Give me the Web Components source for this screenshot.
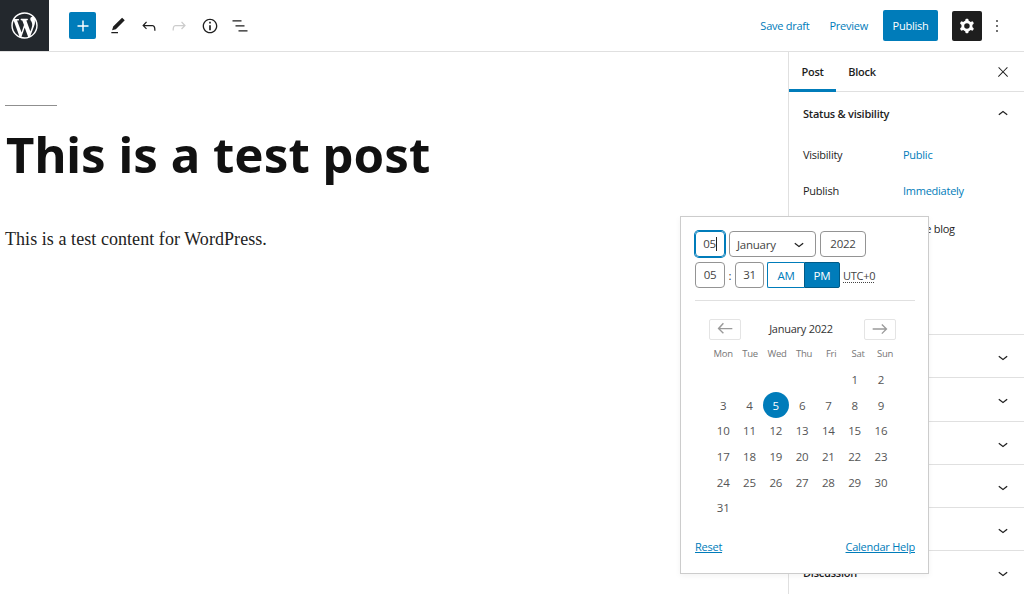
<!DOCTYPE html>
<html lang="en"><head><meta charset="utf-8"><title>Edit Post</title>
<style>
html,body{margin:0;padding:0;height:594px;overflow:hidden;background:#fff}
body{font-family:"Open Sans","Noto Sans",sans-serif;font-size:12px;color:#1e1e1e;letter-spacing:-.25px}
wp-app{display:block}
</style></head><body>
<wp-app></wp-app>
<script>
const P={
plus:'M18 11.2h-5.2V6h-1.6v5.2H6v1.6h5.2V18h1.6v-5.2H18z',
edit:'M20.1 5.1L16.9 2 6.2 12.7l-1.3 4.4 4.5-1.3L20.1 5.1zM4 20.8h8v-1.5H4v1.5z',
undo:'M18.3 11.7c-.6-.6-1.4-.9-2.3-.9H6.7l2.9-3.3-1.1-1-4.5 5L8.5 16l1-1-2.7-2.7H16c.5 0 .9.2 1.3.5 1 1 1 3.4 1 4.5v.3h1.5v-.2c0-1.5 0-4.3-1.5-5.7z',
redo:'M15.6 6.5l-1.1 1 2.9 3.3H8c-.9 0-1.7.3-2.3.9-1.4 1.5-1.4 4.2-1.4 5.6v.2h1.5v-.3c0-1.1 0-3.5 1-4.5.3-.3.7-.5 1.3-.5h9.2L14.5 15l1.1 1.1 4.6-4.6-4.6-5z',
info:'M12 3.2c-4.8 0-8.8 3.9-8.8 8.8 0 4.8 3.9 8.8 8.8 8.8 4.8 0 8.8-3.9 8.8-8.8 0-4.8-4-8.8-8.8-8.8zm0 16c-4 0-7.2-3.3-7.2-7.2C4.8 8 8 4.8 12 4.8s7.2 3.3 7.2 7.2c0 4-3.2 7.2-7.2 7.2zM11 17h2v-6h-2v6zm0-8h2V7h-2v2z',
list:'M13.8 5.2H3v1.5h10.8V5.2zm-3.6 12v1.5H21v-1.5H10.2zm7.2-6H6.6v1.5h10.8v-1.5z',
cog:'M10.289 4.836A1 1 0 0111.275 4h1.306a1 1 0 01.987.836l.244 1.466c.787.26 1.503.679 2.108 1.218l1.393-.522a1 1 0 011.216.437l.653 1.13a1 1 0 01-.23 1.273l-1.148.944a6.025 6.025 0 010 2.435l1.149.946a1 1 0 01.23 1.272l-.653 1.13a1 1 0 01-1.216.437l-1.394-.522c-.605.54-1.32.958-2.108 1.218l-.244 1.466a1 1 0 01-.987.836h-1.306a1 1 0 01-.986-.836l-.244-1.466a5.995 5.995 0 01-2.108-1.218l-1.394.522a1 1 0 01-1.217-.436l-.653-1.131a1 1 0 01.23-1.272l1.149-.946a6.026 6.026 0 010-2.435l-1.148-.944a1 1 0 01-.23-1.272l.653-1.131a1 1 0 011.217-.437l1.393.522a5.994 5.994 0 012.108-1.218l.244-1.466zM14.929 12a3 3 0 11-6 0 3 3 0 016 0z',
more:'M13 19h-2v-2h2v2zm0-6h-2v-2h2v2zm0-6h-2V5h2v2z',
close:'M13 11.8l6.1-6.3-1-1-6.1 6.2-6.1-6.2-1 1 6.1 6.3-6.5 6.7 1 1 6.5-6.6 6.5 6.6 1-1z',
down:'M17.5 11.6L12 16l-5.5-4.4.9-1.2L12 14l4.5-3.6 1 1.2z',
up:'M6.5 12.4L12 8l5.5 4.4-.9 1.2L12 10l-4.5 3.6-1-1.2z',
left:'M20 10.8H6.7l4.1-4.5-1.1-1.1-5.8 6.3 5.8 5.8 1.1-1.1-4-3.9H20z',
right:'M14.5 6.5l-1 1 3.7 3.7H4v1.6h13.2l-3.7 3.7 1 1 5.6-5.5z'};
const icon=(n,s=24,c='currentColor')=>`<svg width="${s}" height="${s}" viewBox="0 0 24 24" fill="${c}" fill-rule="evenodd" style="display:block;flex:none"><path d="${P[n]}"/></svg>`;
const WP='M20 10c0-5.51-4.49-10-10-10C4.48 0 0 4.49 0 10c0 5.52 4.48 10 10 10 5.51 0 10-4.48 10-10zM7.78 15.37L4.37 6.22c.55-.02 1.17-.08 1.17-.08.5-.06.44-1.13-.06-1.11 0 0-1.45.11-2.37.11-.18 0-.37 0-.58-.01C4.12 2.69 6.87 1.11 10 1.11c2.33 0 4.45.87 6.05 2.34-.68-.11-1.65.39-1.65 1.58 0 .74.45 1.36.9 2.1.35.61.55 1.36.55 2.46 0 1.49-1.4 5-1.4 5l-3.03-8.37c.54-.02.82-.17.82-.17.5-.05.44-1.25-.06-1.22 0 0-1.44.12-2.38.12-.87 0-2.33-.12-2.33-.12-.5-.03-.56 1.2-.06 1.22l.92.08 1.26 3.41zM17.41 10c.24-.64.74-1.87.43-4.25.7 1.29 1.05 2.71 1.05 4.25 0 3.29-1.73 6.24-4.4 7.78.97-2.59 1.94-5.2 2.92-7.78zM6.1 18.09C3.12 16.65 1.11 13.53 1.11 10c0-1.3.23-2.48.72-3.59C3.25 10.3 4.67 14.2 6.1 18.09zm4.03-6.63l2.58 6.98c-.86.29-1.76.45-2.71.45-.79 0-1.57-.11-2.29-.33.81-2.38 1.62-4.74 2.42-7.1z';
class Base extends HTMLElement{
  constructor(){super();this.attachShadow({mode:'open'}).innerHTML=this.render();}
  render(){return ''}
}
customElements.define('wp-topbar',class extends Base{render(){return `<style>
:host{display:flex;align-items:center;height:51px;border-bottom:1px solid #e0e0e0;background:#fff;color:#1e1e1e}
.logo{width:49px;height:51px;background:#23282d;display:flex;align-items:center;justify-content:center;flex:none}
.tools{display:flex;align-items:center;margin-left:20px;gap:0}
.add{width:27px;height:27px;background:#007cba;border-radius:2px;color:#fff;display:flex;align-items:center;justify-content:center;margin-right:7px}
.ic{width:30px;height:27px;display:flex;align-items:center;justify-content:center;margin-right:.5px}
.end{margin-left:auto;display:flex;align-items:center;font-size:11px;color:#007cba}
.save{margin-right:20px}.prev{margin-right:15px}
.pub{width:55px;height:31px;background:#007cba;color:#fff;border-radius:2px;display:flex;align-items:center;justify-content:center;margin-right:14px}
.gear{width:30px;height:30px;background:#1e1e1e;color:#fff;border-radius:2px;display:flex;align-items:center;justify-content:center}
.dots{width:30px;display:flex;justify-content:center;color:#1e1e1e;margin-right:12px}
</style>
<div class="logo"><svg width="33" height="33" viewBox="-2.5 -2.5 25 25" fill="#fff"><path d="${WP}" fill-rule="evenodd"/></svg></div>
<div class="tools">
<div class="add">${icon('plus',22)}</div>
<div class="ic">${icon('edit',20)}</div><div class="ic">${icon('undo',20)}</div>
<div class="ic" style="color:#ccc">${icon('redo',20)}</div><div class="ic">${icon('info',20)}</div><div class="ic">${icon('list',20)}</div>
</div>
<div class="end"><span class="save">Save draft</span><span class="prev">Preview</span>
<div class="pub">Publish</div><div class="gear">${icon('cog',22)}</div><div class="dots">${icon('more',20)}</div></div>`}});

customElements.define('wp-editor',class extends Base{render(){return `<style>
:host{display:block;flex:1;min-width:0;padding:53px 0 0 5px;box-sizing:border-box;background:#fff;letter-spacing:0}
hr{width:52px;height:1px;border:0;background:#8f8f8f;margin:0}
h1{font:700 49.2px/1.2 "Noto Sans",sans-serif;color:#111;margin:18px 0 0 1px;white-space:nowrap}
p{font:18px/1.8 "Liberation Serif",serif;color:#222;margin:40px 0 0;letter-spacing:.06px;white-space:nowrap}
</style><hr><h1>This is a test post</h1><p>This is a test content for WordPress.</p>`}});

customElements.define('wp-panel',class extends Base{render(){const t=this.getAttribute('title')||'';return `<style>
:host{display:block;height:43.3px;box-sizing:border-box;border-top:1px solid #e0e0e0}
.h{display:flex;align-items:center;justify-content:space-between;height:42px;padding:0 11px 0 14px;font-weight:600;font-size:11px;color:#1e1e1e}
.h svg{margin:2px 0 0 auto}
</style><div class="h"><span>${t}</span>${icon('down',20)}</div>`}});

customElements.define('wp-row',class extends Base{render(){return `<style>
:host{display:flex;align-items:center;height:36.5px;padding-left:14px;font-size:11px}
.l{width:100px;flex:none;color:#1e1e1e}.v{color:#007cba}
</style><span class="l">${this.getAttribute('label')}</span><span class="v">${this.getAttribute('value')}</span>`}});

customElements.define('wp-sidebar',class extends Base{render(){return `<style>
:host{display:flex;flex-direction:column;width:236px;flex:none;border-left:1px solid #e0e0e0;box-sizing:border-box;background:#fff;font-size:11px}
.tabs{display:flex;height:40px;box-sizing:border-box;border-bottom:1px solid #e0e0e0;align-items:stretch}
.tab{display:flex;align-items:center;font-weight:600;width:47px;box-sizing:border-box;justify-content:center;padding-bottom:1px}
.tab.on{box-shadow:inset 0 -3px 0 #007cba;height:40px}
.x{margin-left:auto;display:flex;align-items:center;padding-right:13px}
.st{height:242px;box-sizing:border-box}
.sh{display:flex;align-items:center;justify-content:space-between;height:43px;padding:0 11px 0 14px;font-weight:600}
.rows{padding-top:1px}
.c{padding:12px 0 0 38px;white-space:nowrap}
</style>
<div class="tabs"><div class="tab on">Post</div><div class="tab" style="width:52px">Block</div><div class="x">${icon('close',16)}</div></div>
<div class="st"><div class="sh"><span>Status &amp; visibility</span>${icon('up',20)}</div>
<div class="rows"><wp-row label="Visibility" value="Public"></wp-row><wp-row label="Publish" value="Immediately"></wp-row></div>
<div class="c">Stick to the top of the blog</div></div>
<wp-panel></wp-panel><wp-panel></wp-panel><wp-panel></wp-panel>
<wp-panel></wp-panel><wp-panel></wp-panel><wp-panel title="Discussion"></wp-panel>`}});

customElements.define('wp-calendar',class extends Base{render(){
const hs=['Mon','Tue','Wed','Thu','Fri','Sat','Sun'];
let cells='';for(let i=0;i<5;i++)cells+='<span></span>';
for(let d=1;d<=31;d++)cells+=`<span class="${d==5?'sel':''}"><b>${d}</b></span>`;
return `<style>
:host{display:block;font-size:11px}
.nav{display:flex;align-items:center;justify-content:space-between;padding:0 19px 0 14px;height:22px}
.btn{width:32px;height:21px;border:1px solid #e4e4e4;border-radius:2px;box-sizing:border-box;display:flex;align-items:center;justify-content:center;color:#9a9a9a}
.ti{font-weight:500;color:#333;font-size:11px;margin-left:-3px;position:relative;top:-1px}
.hd,.g{display:grid;justify-content:start}
.g{grid-template-columns:repeat(7,26.3px);margin-left:15px}
.hd{grid-template-columns:repeat(7,27px);margin-left:14.6px;margin-top:5px;height:17px;align-items:center;font-size:9.5px;color:#767676}
.hd span,.g span{text-align:center;white-space:nowrap}
.g{grid-auto-rows:25.6px;margin-top:5px;color:#555;font-size:11.5px}
.g span{display:flex;align-items:center;justify-content:center}
b{font-weight:400}
.sel b{width:26px;height:26px;border-radius:50%;background:#007cba;color:#fff;display:flex;align-items:center;justify-content:center;flex:none}
</style>
<div class="nav"><div class="btn">${icon('left',22)}</div><span class="ti">January 2022</span><div class="btn">${icon('right',22)}</div></div>
<div class="hd">${hs.map(h=>`<span>${h}</span>`).join('')}</div>
<div class="g">${cells}</div>`}});

customElements.define('wp-date-popover',class extends Base{render(){return `<style>
:host{position:absolute;left:680px;top:216px;width:249px;height:358px;box-sizing:border-box;background:#fff;border:1px solid #ccc;box-shadow:0 2px 6px rgba(0,0,0,.05);padding:14px 13px 0 14px;font-size:11.5px;color:#444}
.r{display:flex;align-items:center;height:26px}
.i{height:26px;box-sizing:border-box;border:1px solid #949494;border-radius:4px;display:flex;align-items:center;justify-content:center;color:#444;font-size:11.5px;flex:none;padding-bottom:1px}
.focus{border-color:#007cba;box-shadow:0 0 0 1px #007cba}
.focus i{display:inline-block;width:1px;height:14px;background:#222}
.sel{justify-content:space-between;padding:0 6px 0 7px}
.seg{display:flex;height:26px;box-sizing:border-box;border-radius:2px;font-size:11.5px;margin-left:3px;flex:none}
.seg span{display:flex;align-items:center;justify-content:center;box-sizing:border-box}
.am{width:37px;border:1px solid #007cba;border-right:0;color:#007cba;border-radius:2px 0 0 2px}
.pm{width:36px;background:#007cba;color:#fff;border:1px solid #005a87;border-radius:0 2px 2px 0}
.tz{margin-left:3px;font-size:11px;color:#444;text-decoration:underline dotted;text-underline-offset:2px}
hr{height:1px;border:0;background:#e0e0e0;margin:12px 0 17px}
.f{display:flex;justify-content:space-between;margin-top:18px;color:#007cba;text-decoration:underline;font-size:11px}
</style>
<div class="r" style="gap:4px"><div class="i focus" style="width:30px">05<i></i></div>
<div class="i sel" style="width:87px"><span>January</span>${icon('down',20,'#1e1e1e')}</div>
<div class="i" style="width:46px">2022</div></div>
<div class="r" style="margin-top:5px"><div class="i" style="width:30px">05</div><span style="width:10px;text-align:center">:</span><div class="i" style="width:29px">31</div>
<div class="seg"><span class="am">AM</span><span class="pm">PM</span></div><span class="tz">UTC+0</span></div>
<hr>
<wp-calendar></wp-calendar>
<div class="f"><span>Reset</span><span>Calendar Help</span></div>`}});

customElements.define('wp-app',class extends Base{render(){return `<style>
:host{display:block;position:relative;width:1024px;height:594px;overflow:hidden}
.m{display:flex;height:542px;overflow:hidden}
</style><wp-topbar></wp-topbar><div class="m"><wp-editor></wp-editor><wp-sidebar></wp-sidebar></div><wp-date-popover></wp-date-popover>`}});
</script></body></html>
